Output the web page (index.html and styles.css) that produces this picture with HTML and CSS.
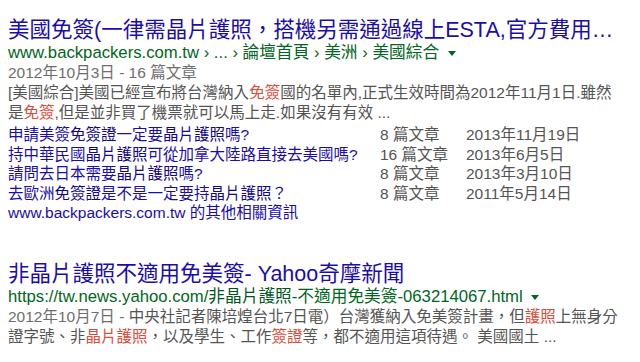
FILE: index.html
```html
<!DOCTYPE html>
<html lang="zh-Hant">
<head>
  <meta charset="UTF-8">
  <title>搜尋結果</title>
  <link rel="stylesheet" href="styles.css">
</head>
<body>
  <div class="result">
    <h3 class="title"><a href="#">美國免簽(一律需晶片護照，搭機另需通過線上ESTA,官方費用…</a></h3>
    <div class="cite">www.backpackers.com.tw › ... › 論壇首頁 › 美洲 › 美國綜合 <span class="arrow"></span></div>
    <div class="meta">2012年10月3日 - 16 篇文章</div>
    <div class="snippet">[美國綜合]美國已經宣布將台灣納入<em>免簽</em>國的名單內,正式生效時間為2012年11月1日.雖然<br>是<em>免簽</em>,但是並非買了機票就可以馬上走.如果沒有有效 ...</div>
    <table class="sitelinks">
      <tr>
        <td class="link"><a href="#">申請美簽<b>免簽證</b>一定要<b>晶片護照</b>嗎?</a></td>
        <td class="count">8 篇文章</td>
        <td class="date">2013年11月19日</td>
      </tr>
      <tr>
        <td class="link"><a href="#">持中華民國<b>晶片護照</b>可從加拿大陸路直接去美國嗎?</a></td>
        <td class="count">16 篇文章</td>
        <td class="date">2013年6月5日</td>
      </tr>
      <tr>
        <td class="link"><a href="#">請問去日本需要<b>晶片護照</b>嗎?</a></td>
        <td class="count">8 篇文章</td>
        <td class="date">2013年3月10日</td>
      </tr>
      <tr>
        <td class="link"><a href="#">去歐洲<b>免簽證</b>是不是一定要持<b>晶片護照</b>？</a></td>
        <td class="count">8 篇文章</td>
        <td class="date">2011年5月14日</td>
      </tr>
    </table>
    <div class="more"><a href="#">www.backpackers.com.tw 的其他相關資訊</a></div>
  </div>

  <div class="result second">
    <h3 class="title"><a href="#">非晶片護照不適用免美簽- Yahoo奇摩新聞</a></h3>
    <div class="cite">https://tw.news.yahoo.com/<b>非晶片護照</b>-不適用免美簽-063214067.html <span class="arrow"></span></div>
    <div class="snippet"><span class="f">2012年10月7日 - </span>中央社記者陳培煌台北7日電）台灣獲納入免美簽計畫，但<em>護照</em>上無身分<br>證字號、非<em>晶片護照</em>，以及學生、工作<em>簽證</em>等，都不適用這項待遇。 美國國土 ...</div>
  </div>
</body>
</html>
```

FILE: styles.css
```css
body {
  margin: 0;
  padding: 17px 8px 0;
  font-family: "Liberation Sans", "Noto Sans CJK TC", sans-serif;
  background: #fff;
  color: #545454;
}
a {
  text-decoration: none;
  color: #1a0dab;
}
.title {
  margin: 0;
  font-size: 21.5px;
  font-weight: normal;
  line-height: 26px;
  white-space: nowrap;
}
.cite {
  color: #006621;
  font-size: 16.7px;
  line-height: 19.5px;
  white-space: nowrap;
}
.cite b {
  font-weight: normal;
  color: #00561c;
}
.arrow {
  display: inline-block;
  margin-left: 4px;
  vertical-align: middle;
  border-top: 5px solid #006621;
  border-left: 4px solid transparent;
  border-right: 4px solid transparent;
}
.meta, .f {
  color: #6e6e6e;
}
.meta {
  font-size: 15.5px;
  line-height: 19.5px;
}
.snippet {
  margin-top: 1px;
  font-size: 15.5px;
  line-height: 19.5px;
  white-space: nowrap;
}
.snippet em {
  font-style: normal;
  color: #dd4b39;
}
.sitelinks {
  margin-top: 3px;
  border-collapse: collapse;
  font-size: 15.5px;
}
.sitelinks td {
  padding: 0;
  height: 19.5px;
  line-height: 19.5px;
  white-space: nowrap;
}
.sitelinks .link {
  width: 372px;
}
.sitelinks .count {
  width: 86px;
}
.sitelinks b {
  font-weight: normal;
  color: #12078a;
}
.more {
  font-size: 15.5px;
  line-height: 19.5px;
}
.second {
  margin-top: 38px;
}
```
